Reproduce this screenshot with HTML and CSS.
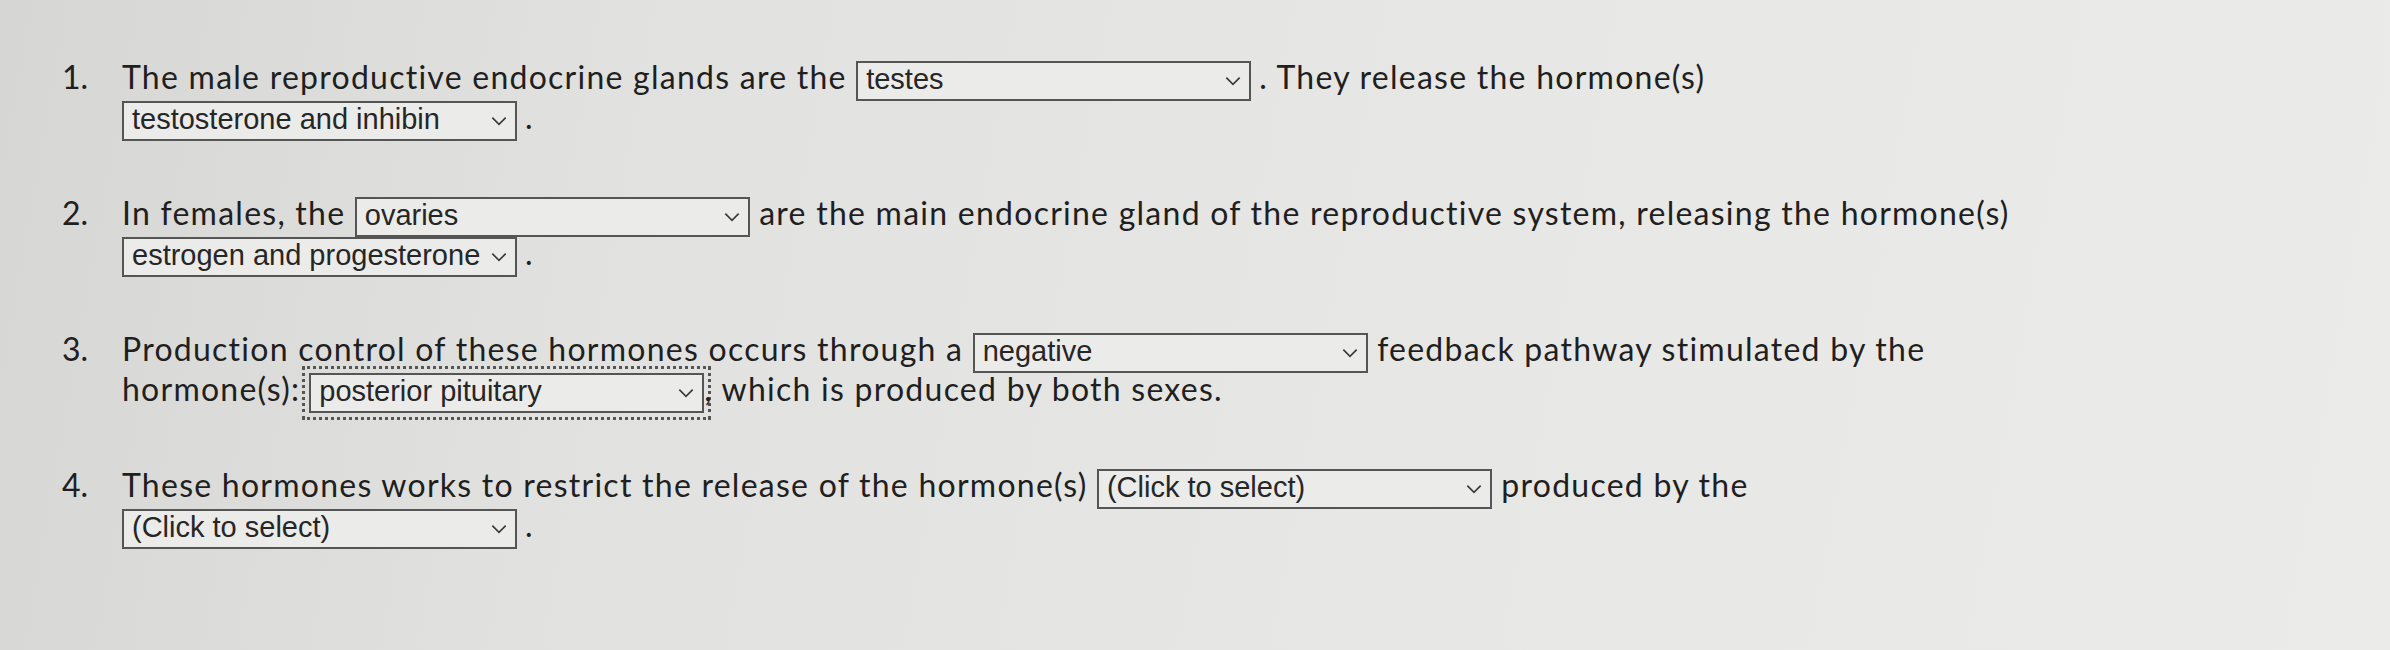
FILE: index.html
```html
<!DOCTYPE html>
<html lang="en">
<head>
<meta charset="utf-8">
<title>Reproductive hormones</title>
<link rel="stylesheet" href="styles.css">
</head>
<body>
<main class="page">
  <ol class="questions">
    <li class="q">
      <span class="num">1.</span>
      <p class="text">The male reproductive endocrine glands are the <span class="sel"><span class="val">testes</span><svg class="chev" viewBox="0 0 14 9"><path d="M1 1.5 L7 7.5 L13 1.5"/></svg></span><span class="punct">.</span> They release the hormone(s) <span class="sel"><span class="val">testosterone and inhibin</span><svg class="chev" viewBox="0 0 14 9"><path d="M1 1.5 L7 7.5 L13 1.5"/></svg></span><span class="punct">.</span></p>
    </li>
    <li class="q">
      <span class="num">2.</span>
      <p class="text">In females, the <span class="sel"><span class="val">ovaries</span><svg class="chev" viewBox="0 0 14 9"><path d="M1 1.5 L7 7.5 L13 1.5"/></svg></span> are the main endocrine gland of the reproductive system, releasing the hormone(s) <span class="sel"><span class="val">estrogen and progesterone</span><svg class="chev" viewBox="0 0 14 9"><path d="M1 1.5 L7 7.5 L13 1.5"/></svg></span><span class="punct">.</span></p>
    </li>
    <li class="q">
      <span class="num">3.</span>
      <p class="text">Production control of these hormones occurs through a <span class="sel"><span class="val">negative</span><svg class="chev" viewBox="0 0 14 9"><path d="M1 1.5 L7 7.5 L13 1.5"/></svg></span> feedback pathway stimulated by the hormone(s):<span class="sel focused"><span class="val">posterior pituitary</span><svg class="chev" viewBox="0 0 14 9"><path d="M1 1.5 L7 7.5 L13 1.5"/></svg></span>, which is produced by both sexes.</p>
    </li>
    <li class="q">
      <span class="num">4.</span>
      <p class="text">These hormones works to restrict the release of the hormone(s) <span class="sel"><span class="val">(Click to select)</span><svg class="chev" viewBox="0 0 14 9"><path d="M1 1.5 L7 7.5 L13 1.5"/></svg></span> produced by the <span class="sel"><span class="val">(Click to select)</span><svg class="chev" viewBox="0 0 14 9"><path d="M1 1.5 L7 7.5 L13 1.5"/></svg></span><span class="punct">.</span></p>
    </li>
  </ol>
</main>
</body>
</html>
```

FILE: styles.css
```css
html, body {
  margin: 0;
  padding: 0;
}
body {
  width: 2390px;
  height: 650px;
  overflow: hidden;
  background: linear-gradient(100deg, #d6d6d4 0%, #e1e1df 25%, #e7e7e5 60%, #ebebe9 100%);
  font-family: Lato, "Open Sans", "Liberation Sans", sans-serif;
  color: #1f1f1f;
}
.page {
  padding: 61px 0 0 62px;
}
.questions {
  list-style: none;
  margin: 0;
  padding: 0;
  width: 1980px;
  display: flex;
  flex-direction: column;
  gap: 56px;
}
.q {
  display: flex;
  align-items: baseline;
}
.num {
  width: 60px;
  flex: none;
  font-size: 32px;
  line-height: 32px;
}
.text {
  margin: 0;
  flex: 1;
  font-size: 32px;
  letter-spacing: 1.25px;
  line-height: 32px;
}
.punct {
  margin-left: 8px;
}
.sel {
  display: inline-flex;
  align-items: center;
  justify-content: space-between;
  box-sizing: border-box;
  width: 395px;
  height: 40px;
  vertical-align: baseline;
  border: 2px solid #555;
  background: #ebebea;
  padding: 0 8px 4px 8px;
  font-family: "Liberation Sans", Arial, sans-serif;
  font-size: 29px;
  letter-spacing: 0;
  line-height: 34px;
  color: #262626;
}
.sel.focused {
  margin-left: 9px;
  outline: 3px dotted #555;
  outline-offset: 4px;
}
.val {
  white-space: nowrap;
}
.chev {
  width: 16px;
  height: 10px;
  flex: none;
  margin-top: 4px;
}
.chev path {
  fill: none;
  stroke: #3a3a3a;
  stroke-width: 1.5;
}
```
